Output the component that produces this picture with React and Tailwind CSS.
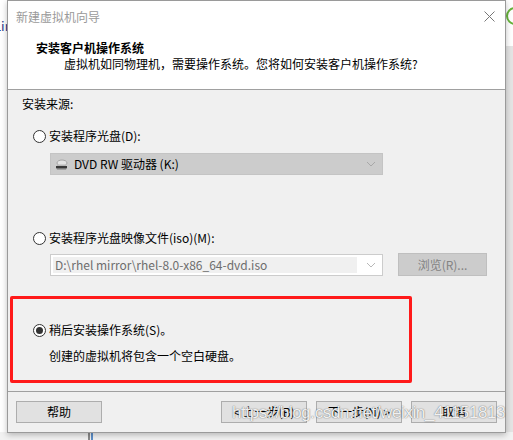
import React from "react";

const font = { fontFamily: '"Noto Sans CJK SC", "Microsoft YaHei", sans-serif' };

function Radio({ checked }) {
  return (
    <span className="flex h-[13px] w-[13px] shrink-0 items-center justify-center rounded-full border border-[#333333] bg-white">
      {checked && <span className="h-[7px] w-[7px] rounded-full bg-[#333333]" />}
    </span>
  );
}

function Chevron({ color = "#a8a8a8" }) {
  return (
    <svg width="10" height="6" viewBox="0 0 10 6" fill="none">
      <path d="M1 1 L5 5 L9 1" stroke={color} strokeWidth="1" />
    </svg>
  );
}

function DriveIcon() {
  return (
    <svg width="13" height="11" viewBox="0 0 13 11">
      <ellipse cx="7" cy="4" rx="5" ry="3" fill="#e4e4e4" stroke="#9a9a9a" strokeWidth="0.8" />
      <path d="M1 7 L12 7 L12 9 L1 9 Z" fill="#3a3a3a" />
      <path d="M1 9 L12 9 L11 10.5 L2 10.5 Z" fill="#7a7a7a" />
      <rect x="2" y="5.5" width="9" height="1.5" fill="#b8b8b8" />
    </svg>
  );
}

function Btn({ children, className = "" }) {
  return (
    <div
      className={
        "flex h-[22px] w-[86px] items-center justify-center border border-[#adadad] bg-[#e1e1e1] text-[12px] leading-none text-black " +
        className
      }
    >
      {children}
    </div>
  );
}

export default function App() {
  return (
    <div className="relative h-[440px] w-[513px] overflow-hidden bg-[#eeeeee]" style={font}>
      {/* desktop background */}
      <div className="absolute left-0 top-0 h-[440px] w-[8px] bg-white">
        <span className="absolute left-[-6px] top-[16px] text-[13px] text-[#1f3a8a]">Lin</span>
      </div>
      <div className="absolute right-0 top-0 h-[440px] w-[8px] bg-[#e4e4e4]">
        <div className="h-[46px] bg-white" />
        <div className="absolute left-[1px] top-[7px] h-[18px] w-[18px] rounded-full border-2 border-[#66b33a]" />
      </div>
      <div className="absolute bottom-0 left-0 h-[8px] w-[513px] bg-[#f2f2f2]">
        <div className="absolute left-[88px] top-0 h-[8px] w-[2px] bg-[#8a8a8a]" />
        <div className="absolute left-[91px] top-0 h-[8px] w-[2px] bg-[#5d8fc9]" />
      </div>

      {/* dialog window */}
      <div className="absolute left-[7px] top-0 flex h-[433px] w-[499px] flex-col border border-[#9a9a9a] bg-[#f0f0f0] shadow-[0_2px_6px_rgba(0,0,0,0.25)]">
        {/* title bar */}
        <div className="flex h-[31px] items-center justify-between bg-white pl-[8px] pr-[10px]">
          <span className="text-[12px] text-[#9a9a9a]">新建虚拟机向导</span>
          <svg width="11" height="11" viewBox="0 0 11 11">
            <path d="M0.5 0.5 L10.5 10.5 M10.5 0.5 L0.5 10.5" stroke="#777777" strokeWidth="1" />
          </svg>
        </div>
        {/* header */}
        <div className="flex h-[57px] flex-col bg-white pl-[28px] pt-[8px] text-[12px] leading-[16px] text-black">
          <span className="font-bold">安装客户机操作系统</span>
          <span className="pl-[28px]">虚拟机如同物理机，需要操作系统。您将如何安装客户机操作系统?</span>
        </div>
        <div className="h-px bg-[#a0a0a0]" />

        {/* body */}
        <div className="flex flex-1 flex-col pl-[14px] pt-[6px] text-[12px] leading-[16px] text-black">
          <span>安装来源:</span>

          <div className="ml-[11px] mt-[16px] flex items-center gap-[3px]">
            <Radio />
            <span>安装程序光盘(D):</span>
          </div>
          <div className="ml-[28px] mt-[9px] flex h-[22px] w-[333px] items-center border border-[#c4c4c4] bg-[#cccccc] pl-[4px] pr-[6px]">
            <DriveIcon />
            <span className="ml-[6px] flex-1">DVD RW 驱动器 (K:)</span>
            <Chevron />
          </div>

          <div className="ml-[11px] mt-[55px] flex items-center gap-[3px]">
            <Radio />
            <span>安装程序光盘映像文件(iso)(M):</span>
          </div>
          <div className="ml-[28px] mt-[7px] flex items-center">
            <div className="flex h-[22px] w-[333px] items-center border border-[#cccccc] bg-white p-[2px] pr-[6px]">
              <div className="flex h-full flex-1 items-center bg-[#f0f0f0] pl-[2px] text-[#6d6d6d]">
                D:\rhel mirror\rhel-8.0-x86_64-dvd.iso
              </div>
              <span className="ml-[9px]">
                <Chevron color="#b8b8b8" />
              </span>
            </div>
            <div className="ml-[15px] flex h-[23px] w-[89px] items-center justify-center border border-[#bfbfbf] bg-[#cccccc] text-[#838383]">
              浏览(R)...
            </div>
          </div>

          <div className="ml-[11px] mt-[46px] flex items-center gap-[3px]">
            <Radio checked />
            <span>稍后安装操作系统(S)。</span>
          </div>
          <span className="ml-[27px] mt-[10px]">创建的虚拟机将包含一个空白硬盘。</span>
        </div>

        <div className="h-px bg-[#a0a0a0]" />
        {/* buttons */}
        <div className="flex h-[40px] items-start pl-[8px] pt-[9px]">
          <Btn>帮助</Btn>
          <Btn className="ml-[119px]">&lt; 上一步(B)</Btn>
          <Btn className="ml-[9px]">下一步(N) &gt;</Btn>
          <Btn className="ml-[9px]">取消</Btn>
        </div>
      </div>

      {/* red annotation box */}
      <div className="absolute left-[10px] top-[296px] h-[87px] w-[402px] rounded-[2px] border-[3px] border-[#ff1a1a]" />

      {/* watermark */}
      <div
        className="absolute left-[232px] top-[400px] whitespace-nowrap text-[17px] tracking-[-0.4px] text-white/90 [text-shadow:0_0_1px_rgba(0,0,0,0.55),0_0_2px_rgba(0,0,0,0.2)]"
        style={{ fontFamily: '"Liberation Sans", Arial, sans-serif' }}
      >
        https://blog.csdn.net/weixin_41151813
      </div>
    </div>
  );
}
